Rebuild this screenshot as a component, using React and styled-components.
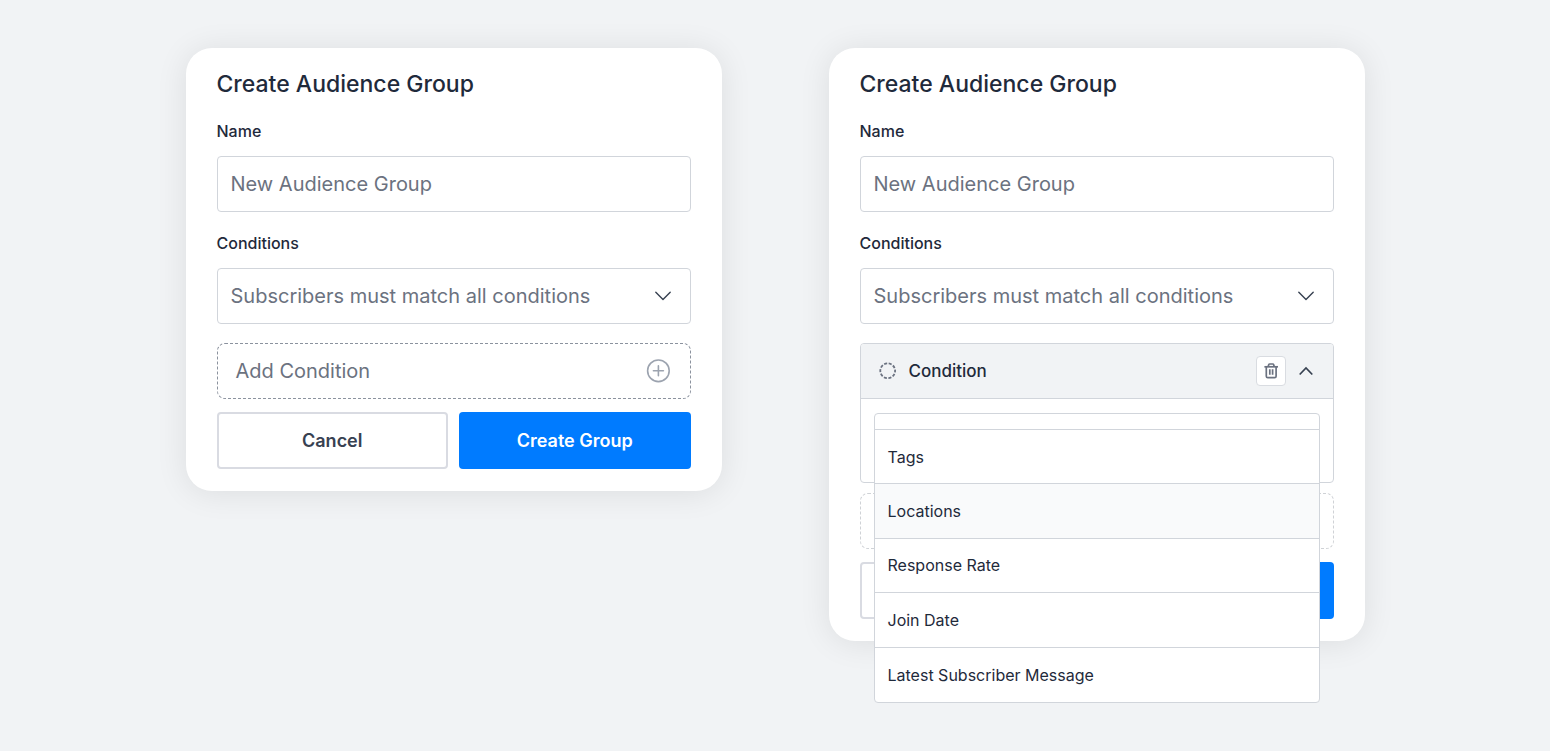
import React, { useState } from 'react';
import styled, { createGlobalStyle } from 'styled-components';

const GlobalStyle = createGlobalStyle`
  * {
    box-sizing: border-box;
  }

  body {
    margin: 0;
    background-color: #f1f3f5;
    font-family: 'Inter', sans-serif;
    color: #1f2a3b;
  }

  button,
  input,
  select {
    font-family: inherit;
    margin: 0;
  }
`;

const Page = styled.main`
  display: flex;
  justify-content: center;
  align-items: flex-start;
  gap: 107px;
  min-height: 100vh;
  padding: 48px 24px;
  @media (max-width: 900px) {
    flex-direction: column;
    align-items: center;
    gap: 48px;
  }
`;

const Card = styled.form`
  flex: 0 1 536px;
  min-width: 0;
  padding: 21px 31px 22px;
  border-radius: 26px;
  background-color: #fff;
  box-shadow: 0 2px 32px rgba(0, 0, 0, 0.09);
`;

const Title = styled.h2`
  margin: 0 0 21px;
  font-size: 23px;
  font-weight: 500;
  line-height: 30px;
`;

const Field = styled.div`
  display: flex;
  flex-direction: column;
  gap: 14px;
  margin-bottom: ${({ $last }) => ($last ? '19px' : '20px')};
`;

const Label = styled.label`
  font-size: 16px;
  font-weight: 500;
  line-height: 22px;
`;

const TextInput = styled.input`
  width: 100%;
  height: 56px;
  padding: 0 13px;
  border: 1px solid #d1d5db;
  border-radius: 4px;
  background-color: #fff;
  color: #6b7280;
  font-size: 20px;

  &::placeholder {
    color: #6b7280;
    opacity: 1;
  }
`;

const SelectWrapper = styled.div`
  position: relative;
`;

const Select = styled.select`
  display: block;
  width: 100%;
  height: 56px;
  padding: 0 56px 0 13px;
  border: 1px solid #d1d5db;
  border-radius: 4px;
  background-color: #fff;
  color: #6b7280;
  font-size: 20px;
  appearance: none;
`;

const SelectIcon = styled.span`
  position: absolute;
  top: 0;
  right: 19px;
  bottom: 0;
  display: flex;
  align-items: center;
  color: #374151;
  pointer-events: none;
`;

const AddButton = styled.button`
  display: flex;
  justify-content: space-between;
  align-items: center;
  width: 100%;
  height: 56px;
  padding: 0 19px 0 18px;
  border: 1px dashed ${({ $muted }) => ($muted ? '#cfd2d6' : '#8b929e')};
  border-radius: 8px;
  background-color: #fff;
  color: #6b7280;
  font-size: 20px;
  cursor: pointer;
`;

const Actions = styled.div`
  display: grid;
  grid-template-columns: 1fr 1fr;
  gap: 11px;
  margin-top: 13px;
`;

const Button = styled.button`
  height: 57px;
  border: ${({ $primary }) => ($primary ? 'none' : '2px solid #d9dbe2')};
  border-radius: 4px;
  background-color: ${({ $primary }) => ($primary ? '#007bff' : '#fff')};
  color: ${({ $primary }) => ($primary ? '#fff' : '#374151')};
  font-size: 18px;
  font-weight: 600;
  cursor: pointer;
`;

const Panel = styled.section`
  margin-bottom: 10px;
  border: 1px solid #d1d5db;
  border-radius: 4px;
`;

const PanelHeader = styled.header`
  display: flex;
  align-items: center;
  height: 55px;
  padding: 0 17px;
  border-bottom: 1px solid #d1d5db;
  border-radius: 3px 3px 0 0;
  background-color: #f1f3f5;
`;

const PanelTitle = styled.h3`
  flex: 1;
  margin: 0 0 0 11px;
  font-size: 17px;
  font-weight: 500;
  line-height: 24px;
`;

const DeleteButton = styled.button`
  display: flex;
  justify-content: center;
  align-items: center;
  width: 30px;
  height: 30px;
  margin-right: 10px;
  padding: 0;
  border: 1px solid #d9dce1;
  border-radius: 4px;
  background-color: #fff;
  color: #6b7280;
  cursor: pointer;
`;

const ToggleButton = styled.button`
  display: flex;
  padding: 0;
  border: none;
  background: none;
  color: #374151;
  cursor: pointer;
`;

const PanelBody = styled.div`
  position: relative;
  padding: 14px 13px 13px;
`;

const Combobox = styled.button`
  display: block;
  width: 100%;
  height: 56px;
  border: 1px solid #d1d5db;
  border-radius: 4px;
  background-color: #fff;
`;

const Menu = styled.ul`
  position: absolute;
  top: 30px;
  left: 13px;
  right: 13px;
  z-index: 1;
  display: grid;
  grid-auto-rows: 1fr;
  height: 274px;
  margin: 0;
  padding: 0;
  border: 1px solid #d1d5db;
  border-radius: 0 0 4px 4px;
  background-color: #fff;
  list-style: none;
`;

const Option = styled.li`
  display: flex;
  align-items: center;
  padding: 0 13px;
  border-bottom: 1px solid #d1d5db;
  background-color: ${({ $active }) => ($active ? '#f9fafb' : 'transparent')};
  font-size: 16px;
  cursor: pointer;

  &:last-child {
    border-bottom: none;
  }
`;

const ChevronDown = () => (
  <svg width='18' height='18' viewBox='0 0 18 18' fill='none' aria-hidden='true'>
    <path
      d='M1.8 5.3L9 12.5L16.2 5.3'
      stroke='currentColor'
      strokeWidth='1.4'
      strokeLinecap='round'
      strokeLinejoin='round'
    />
  </svg>
);

const ChevronUp = () => (
  <svg width='20' height='18' viewBox='0 0 20 18' fill='none' aria-hidden='true'>
    <path d='M3.7 12.5L10 6L16.3 12.5' stroke='currentColor' strokeWidth='1.7' />
  </svg>
);

const PlusCircle = () => (
  <svg width='26' height='26' viewBox='0 0 26 26' fill='none' aria-hidden='true'>
    <g stroke='#9ca3af' strokeWidth='1.6' strokeLinecap='round'>
      <circle cx='13.4' cy='12.8' r='10.8' />
      <path d='M13.4 7.8V17.8M8.4 12.8H18.4' />
    </g>
  </svg>
);

const DashedCircle = () => (
  <svg width='20' height='20' viewBox='0 0 20 20' fill='none' aria-hidden='true'>
    <circle
      cx='9.7'
      cy='9.8'
      r='7.4'
      stroke='#6b7280'
      strokeWidth='1.8'
      strokeDasharray='3.1 1.55'
      strokeDashoffset='1.55'
    />
  </svg>
);

const Trash = () => (
  <svg width='16' height='18' viewBox='0 0 16 18' fill='none' aria-hidden='true'>
    <g stroke='currentColor' strokeWidth='1.7'>
      <path d='M1.4 4.8H15' />
      <path d='M3.3 4.8V14.2Q3.3 15.7 4.8 15.7H11.6Q13.1 15.7 13.1 14.2V4.8' />
      <path d='M5.2 4.6L5.8 2.5Q6 2 6.6 2H9.8Q10.4 2 10.6 2.5L11.2 4.6' />
      <path d='M6.8 7.2V12.8M9.6 7.2V12.8' />
    </g>
  </svg>
);

const options = [
  'Tags',
  'Locations',
  'Response Rate',
  'Join Date',
  'Latest Subscriber Message',
];

const ConditionPanel = ({ id }) => {
  const [active, setActive] = useState('Locations');

  return (
    <Panel>
      <PanelHeader>
        <DashedCircle />
        <PanelTitle>Condition</PanelTitle>
        <DeleteButton type='button' aria-label='Delete condition'>
          <Trash />
        </DeleteButton>
        <ToggleButton type='button' aria-label='Collapse condition'>
          <ChevronUp />
        </ToggleButton>
      </PanelHeader>
      <PanelBody>
        <Combobox
          type='button'
          role='combobox'
          aria-label='Condition type'
          aria-expanded='true'
          aria-controls={`${id}-menu`}
        />
        <Menu id={`${id}-menu`} role='listbox' aria-label='Condition type'>
          {options.map((option) => (
            <Option
              key={option}
              role='option'
              aria-selected={option === active}
              $active={option === active}
              onMouseEnter={() => setActive(option)}
            >
              {option}
            </Option>
          ))}
        </Menu>
      </PanelBody>
    </Panel>
  );
};

const AudienceForm = ({ id, withCondition }) => (
  <Card onSubmit={(e) => e.preventDefault()}>
    <Title>Create Audience Group</Title>
    <Field>
      <Label htmlFor={`${id}-name`}>Name</Label>
      <TextInput id={`${id}-name`} type='text' placeholder='New Audience Group' />
    </Field>
    <Field $last>
      <Label htmlFor={`${id}-match`}>Conditions</Label>
      <SelectWrapper>
        <Select id={`${id}-match`}>
          <option>Subscribers must match all conditions</option>
        </Select>
        <SelectIcon>
          <ChevronDown />
        </SelectIcon>
      </SelectWrapper>
    </Field>
    {withCondition && <ConditionPanel id={id} />}
    <AddButton
      type='button'
      $muted={withCondition}
      aria-label={withCondition ? 'Add Condition' : undefined}
    >
      {!withCondition && (
        <>
          Add Condition
          <PlusCircle />
        </>
      )}
    </AddButton>
    <Actions>
      <Button type='button' aria-label='Cancel'>
        {!withCondition && 'Cancel'}
      </Button>
      <Button type='submit' $primary aria-label='Create Group'>
        {!withCondition && 'Create Group'}
      </Button>
    </Actions>
  </Card>
);

const App = () => (
  <>
    <GlobalStyle />
    <Page>
      <AudienceForm id='empty' />
      <AudienceForm id='filled' withCondition />
    </Page>
  </>
);

export default App;
